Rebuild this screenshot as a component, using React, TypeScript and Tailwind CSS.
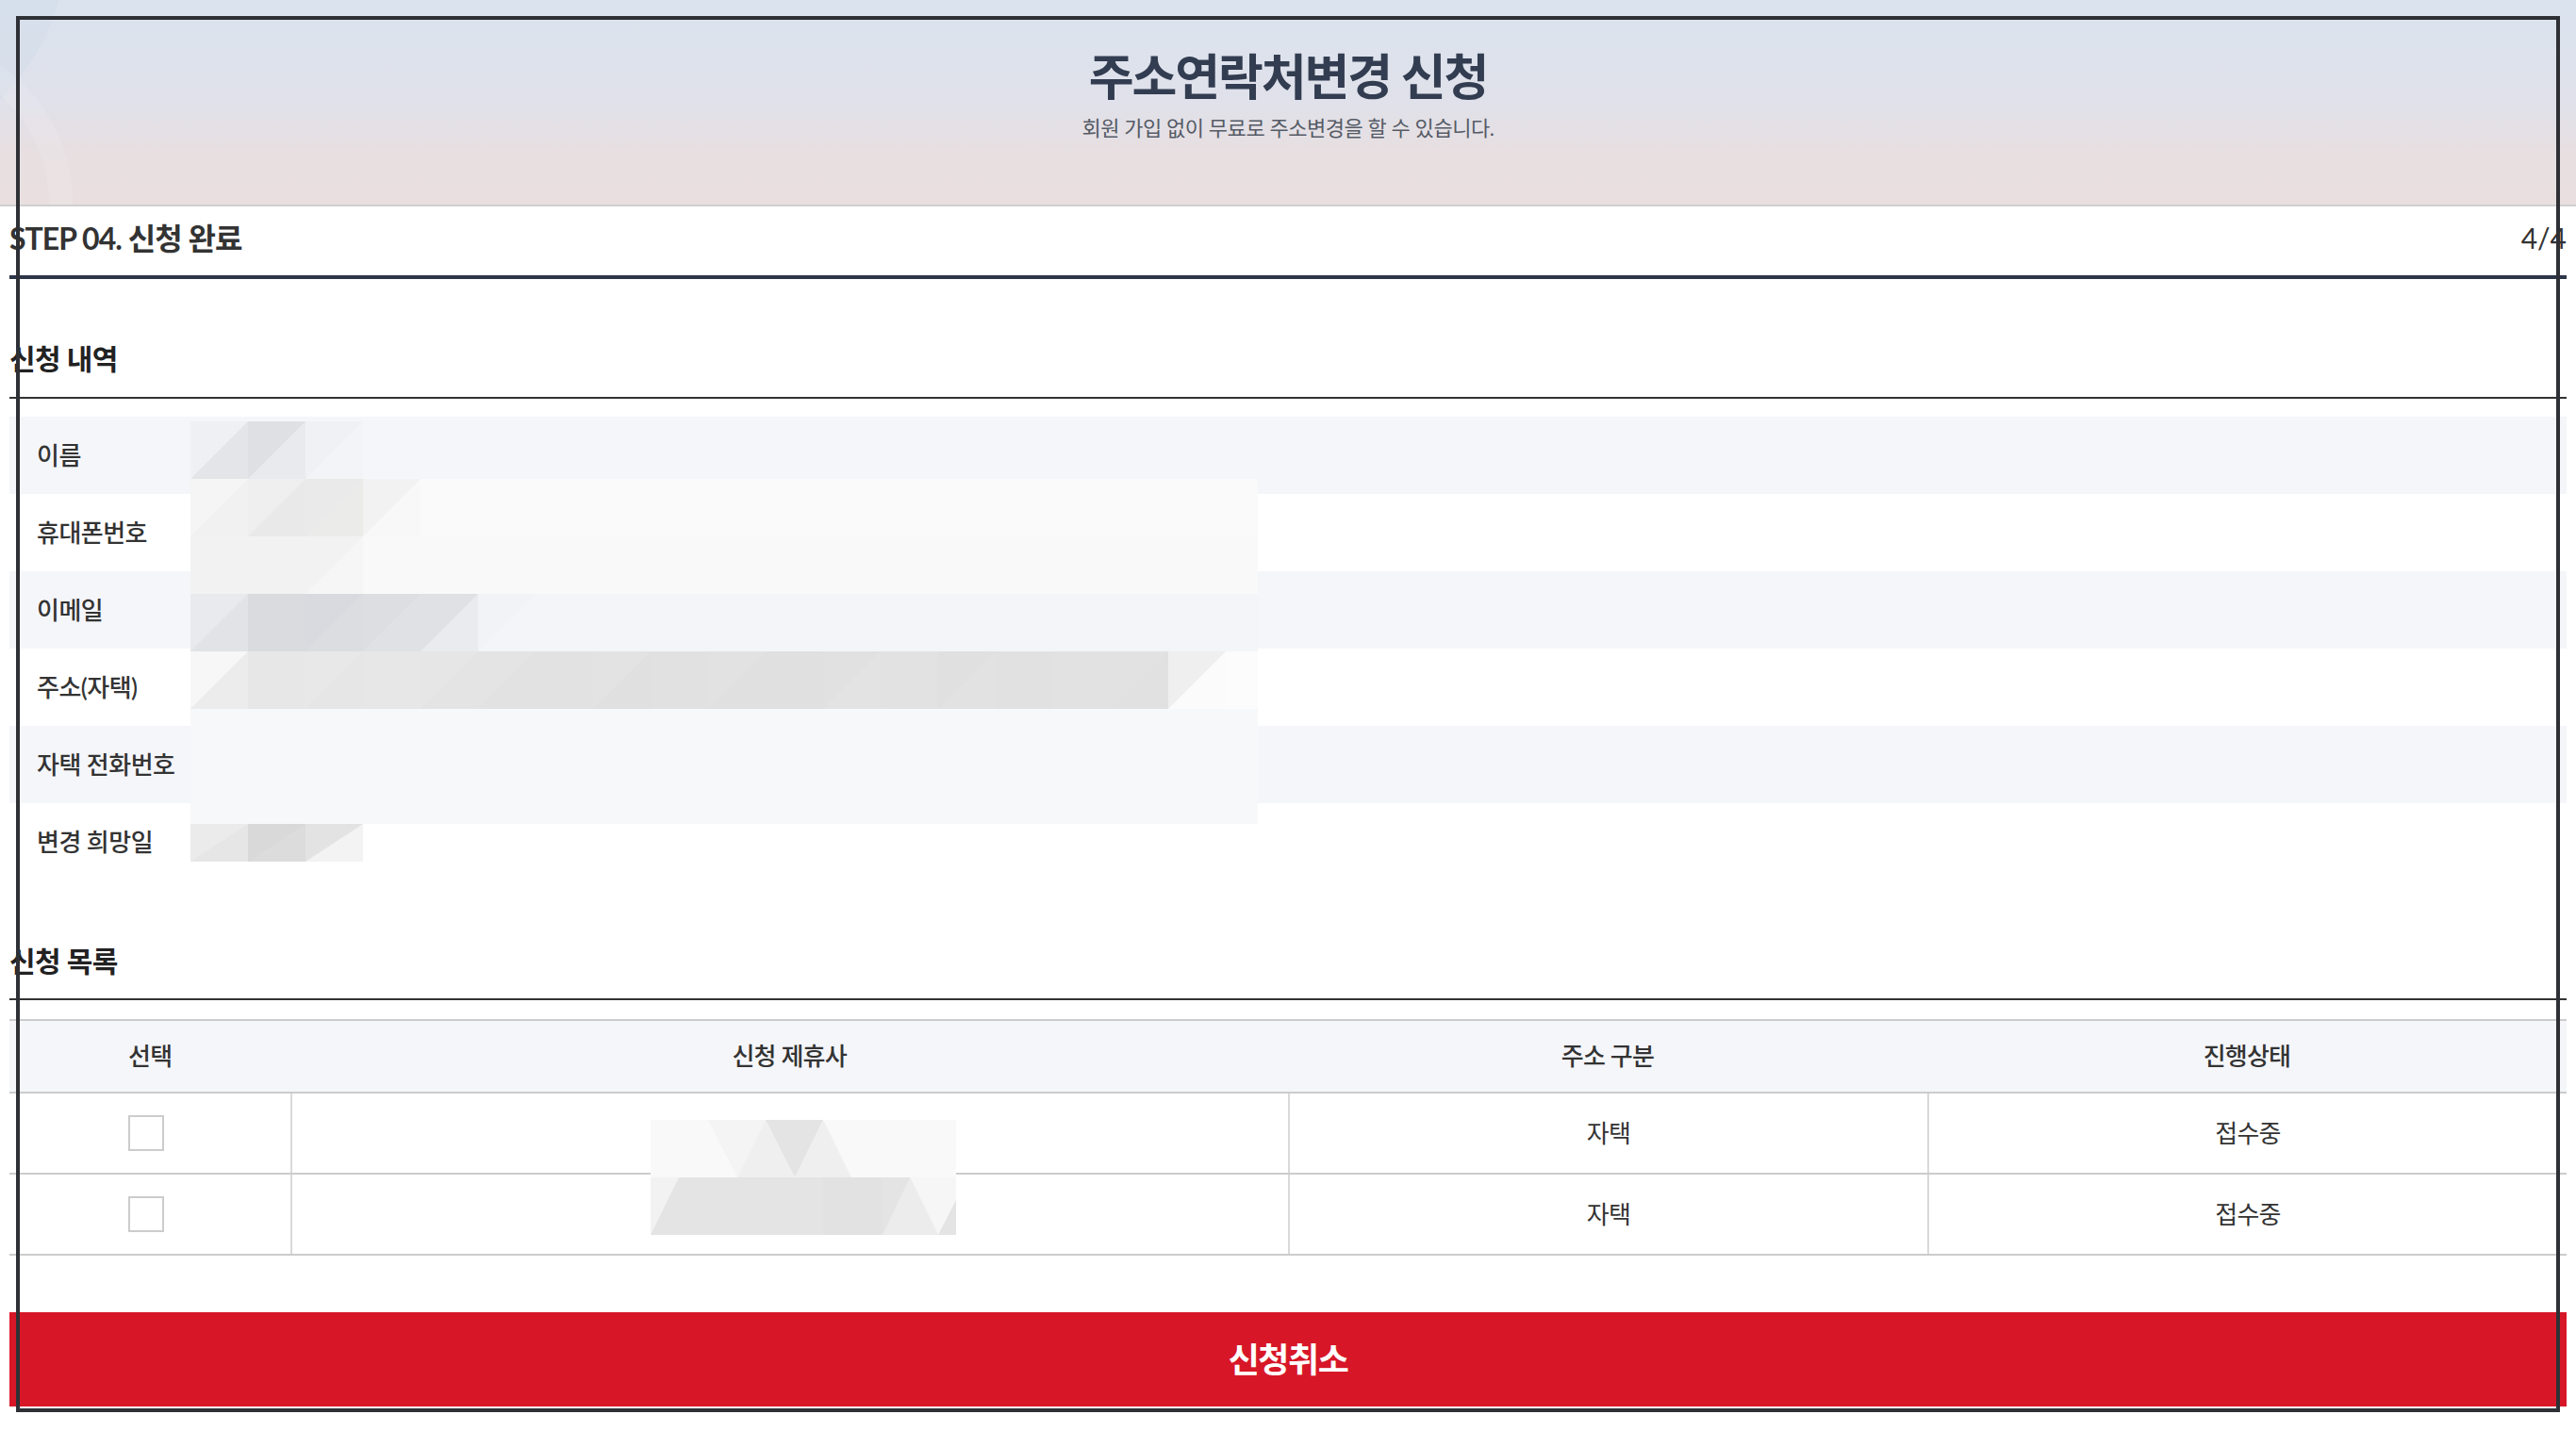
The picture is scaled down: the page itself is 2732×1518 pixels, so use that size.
import React from "react";

type Cell = [string, string?];

type Band = {
  y: number;
  h: number;
  cells: Cell[];
  fill?: string;
};

const CELL = 61;
const MOSAIC_WIDTH = 1132;

// pixelated redaction over the detail values
const detailBands: Band[] = [
  {
    y: 0,
    h: 61,
    cells: [
      ["#eef0f3", "#e4e5e9"],
      ["#dfe0e4", "#e9eaee"],
      ["#f0f1f5", "#f3f4f8"],
    ],
  },
  {
    y: 61,
    h: 61,
    cells: [
      ["#f5f5f5", "#f1f1f1"],
      ["#eeefee", "#e8e9e8"],
      ["#e9eae9", "#ebecea"],
      ["#f2f2f2", "#f8f8f8"],
    ],
    fill: "#fafafa",
  },
  {
    y: 122,
    h: 61,
    cells: [["#f2f2f2"], ["#f2f2f2"], ["#f2f2f2", "#f6f6f7"]],
    fill: "#f9f9fa",
  },
  {
    y: 183,
    h: 61,
    cells: [
      ["#e9eaee", "#e2e3e7"],
      ["#dadbdf"],
      ["#d9dadf", "#dcdde1"],
      ["#dddee2", "#e0e1e4"],
      ["#e0e1e4", "#eaebee"],
      ["#f2f3f6", "#f4f5f9"],
    ],
    fill: "#f4f5f9",
  },
  {
    y: 244,
    h: 61,
    cells: [
      ["#f7f7f7", "#ececec"],
      ["#e7e7e7"],
      ["#e8e8e8", "#e6e6e6"],
      ["#e7e7e7"],
      ["#e6e6e6", "#e4e4e4"],
      ["#e4e4e4", "#e2e2e2"],
      ["#e2e2e2"],
      ["#e3e3e3", "#e0e0e0"],
      ["#e1e1e1"],
      ["#e2e2e2", "#e0e0e0"],
      ["#e0e0e0"],
      ["#e1e1e1", "#e3e3e3"],
      ["#e2e2e2"],
      ["#e0e0e0", "#e2e2e2"],
      ["#e1e1e1"],
      ["#e2e2e2"],
      ["#e2e2e2", "#e1e1e1"],
      ["#efefef", "#fbfbfb"],
    ],
    fill: "#fcfcfc",
  },
  { y: 305, h: 61, cells: [], fill: "#f7f8fa" },
  { y: 366, h: 61, cells: [], fill: "#f7f8fa" },
  {
    y: 427,
    h: 40,
    cells: [
      ["#ebebeb", "#e6e6e6"],
      ["#d9d9d9", "#dcdcdc"],
      ["#e3e3e3", "#f3f3f3"],
    ],
  },
];

const details = [
  { label: "이름", shaded: true },
  { label: "휴대폰번호", shaded: false },
  { label: "이메일", shaded: true },
  { label: "주소(자택)", shaded: false },
  { label: "자택 전화번호", shaded: true },
  { label: "변경 희망일", shaded: false },
];

const requests = [
  { type: "자택", status: "접수중" },
  { type: "자택", status: "접수중" },
];

const gridCols = "grid grid-cols-[11%_39%_25%_25%]";

function DetailMosaic() {
  return (
    <svg
      width={MOSAIC_WIDTH}
      height={467}
      className="pointer-events-none absolute left-[192px] top-[5px]"
    >
      {detailBands.map((band) => (
        <g key={band.y}>
          {band.cells.map(([ul, lr], i) => {
            const x = i * CELL;
            return (
              <g key={i}>
                <rect x={x} y={band.y} width={CELL} height={band.h} fill={ul} />
                {lr && (
                  <polygon
                    points={`${x + CELL},${band.y} ${x + CELL},${band.y + band.h} ${x},${band.y + band.h}`}
                    fill={lr}
                  />
                )}
              </g>
            );
          })}
          {band.fill && (
            <rect
              x={band.cells.length * CELL}
              y={band.y}
              width={MOSAIC_WIDTH - band.cells.length * CELL}
              height={band.h}
              fill={band.fill}
            />
          )}
        </g>
      ))}
    </svg>
  );
}

function PartnerMosaic() {
  return (
    <svg
      width={324}
      height={122}
      className="pointer-events-none absolute left-[680px] top-[105px]"
    >
      <rect x={0} y={0} width={324} height={61} fill="#f9f9f9" />
      <polygon points="61,0 122,0 92,61" fill="#f4f4f4" />
      <polygon points="92,61 122,0 153,61" fill="#efefef" />
      <polygon points="122,0 183,0 153,61" fill="#e4e4e4" />
      <polygon points="153,61 183,0 213,61" fill="#efefef" />
      <rect x={0} y={61} width={324} height={61} fill="#e4e4e4" />
      <polygon points="0,61 30,61 0,122" fill="#f2f2f2" />
      <rect x={183} y={61} width={63} height={61} fill="#e2e2e2" />
      <polygon points="246,122 275,61 305,122" fill="#ececec" />
      <polygon points="275,61 324,61 324,85 305,122" fill="#f6f6f6" />
    </svg>
  );
}

export default function App() {
  return (
    <div className="relative min-h-[1518px] bg-white font-['Lato','Noto_Sans_CJK_KR',sans-serif] text-[#333]">
      <header className="relative h-[219px] overflow-hidden border-b-2 border-[#cfcfcf] bg-[linear-gradient(180deg,#dae3ee_0%,#e0e1ea_50%,#e7dfe1_74%,#e9dfdf_100%)]">
        <div className="absolute left-[-390px] top-[-290px] h-[460px] w-[460px] rounded-full bg-[#cfdbe8]/40" />
        <div className="absolute left-[-277px] top-[38px] h-[354px] w-[354px] rounded-full border-[25px] border-white/10" />
        <div className="relative flex flex-col items-center pt-[51px]">
          <h1 className="text-[52px] font-bold leading-[60px] tracking-[-0.04em] text-[#333d51]">
            주소연락처변경 신청
          </h1>
          <p className="mt-[10px] text-[22px] leading-[30px] tracking-[-0.02em] text-[#555b66]">
            회원 가입 없이 무료로 주소변경을 할 수 있습니다.
          </p>
        </div>
      </header>

      <main className="px-[10px] pb-[26px]">
        <div className="flex h-[77px] items-center justify-between border-b-4 border-[#2d3548] pb-[6px]">
          <h2 className="text-[32px] font-bold tracking-[-0.03em] text-[#333]">
            STEP 04. 신청 완료
          </h2>
          <span className="text-[30px] text-[#333]">4/4</span>
        </div>

        <section className="pt-[64px]">
          <h3 className="border-b-2 border-[#333] pb-[21px] text-[30px] font-bold leading-[40px] tracking-[-0.02em] text-[#222]">
            신청 내역
          </h3>
          <div className="relative mt-[19px]">
            {details.map((row) => (
              <div
                key={row.label}
                className={`flex h-[82px] items-center ${row.shaded ? "bg-[#f5f6fa]" : "bg-white"}`}
              >
                <span className="w-[192px] pl-[29px] text-[26px] font-medium tracking-[-0.02em] text-[#333]">
                  {row.label}
                </span>
                <span className="flex-1" />
              </div>
            ))}
            <DetailMosaic />
          </div>
        </section>

        <section className="pt-[65px]">
          <h3 className="border-b-2 border-[#333] pb-[20px] text-[30px] font-bold leading-[40px] tracking-[-0.02em] text-[#222]">
            신청 목록
          </h3>
          <div className="relative mt-[20px] border-t-2 border-[#cccccc]">
            <div
              className={`${gridCols} h-[77px] items-center border-b-2 border-[#cccccc] bg-[#f5f6fa] text-center text-[26px] font-medium tracking-[-0.03em]`}
            >
              <span>선택</span>
              <span>신청 제휴사</span>
              <span>주소 구분</span>
              <span>진행상태</span>
            </div>
            {requests.map((req, i) => (
              <div
                key={i}
                className={`${gridCols} h-[86px] border-b-2 border-[#cccccc] text-center text-[26px] tracking-[-0.03em]`}
              >
                <div className="flex items-center justify-center pr-[8px]">
                  <span className="h-[38px] w-[38px] border-2 border-[#cccccc] bg-white" />
                </div>
                <div className="border-l-2 border-[#d9d9d9]" />
                <div className="flex items-center justify-center border-l-2 border-[#d9d9d9]">
                  {req.type}
                </div>
                <div className="flex items-center justify-center border-l-2 border-[#d9d9d9]">
                  {req.status}
                </div>
              </div>
            ))}
            <PartnerMosaic />
          </div>
        </section>

        <button
          type="button"
          className="mt-[60px] flex h-[100px] w-full items-center justify-center bg-[#d71728] text-[36px] font-bold tracking-[-0.04em] text-white"
        >
          신청취소
        </button>
      </main>

      <div className="pointer-events-none absolute left-[17px] top-[17px] h-[1481px] w-[2698px] border-4 border-[#2e3035]" />
    </div>
  );
}
